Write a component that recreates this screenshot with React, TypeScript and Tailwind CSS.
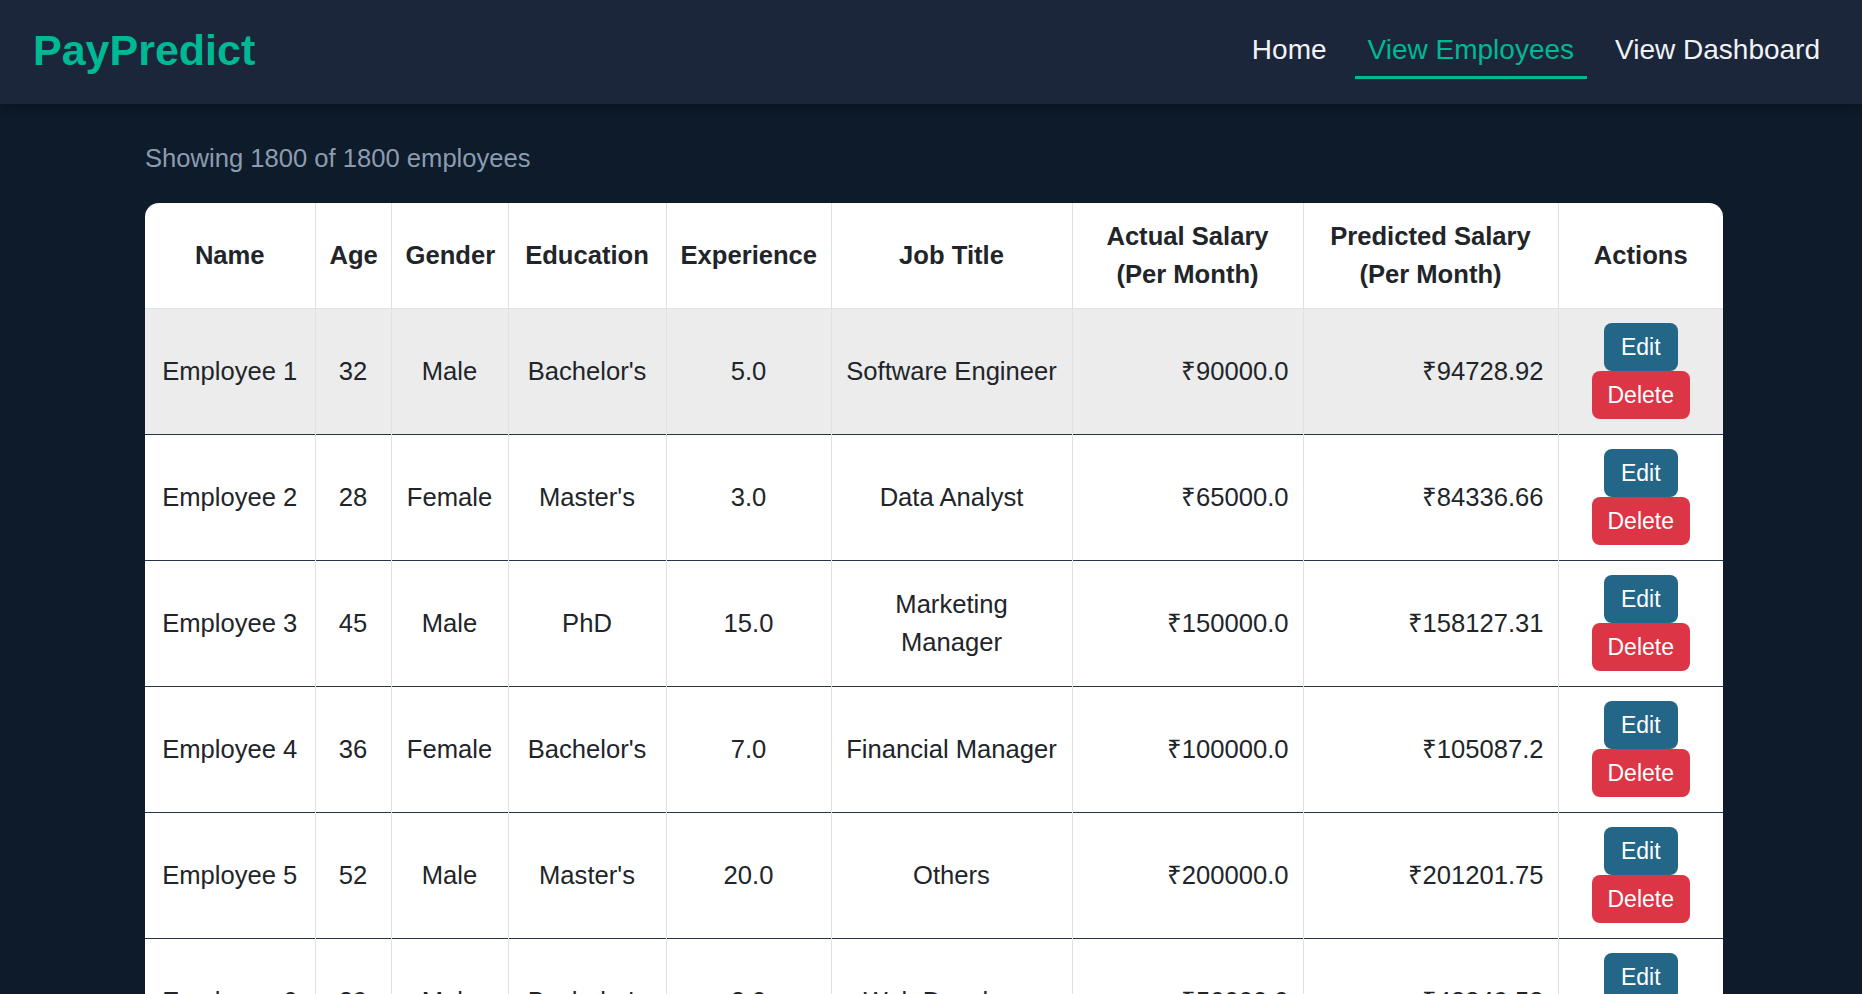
import React from "react";

interface Employee {
  name: string;
  age: number;
  gender: string;
  education: string;
  experience: string;
  jobTitle: string;
  actual: string;
  predicted: string;
}

const employees: Employee[] = [
  { name: "Employee 1", age: 32, gender: "Male", education: "Bachelor's", experience: "5.0", jobTitle: "Software Engineer", actual: "₹90000.0", predicted: "₹94728.92" },
  { name: "Employee 2", age: 28, gender: "Female", education: "Master's", experience: "3.0", jobTitle: "Data Analyst", actual: "₹65000.0", predicted: "₹84336.66" },
  { name: "Employee 3", age: 45, gender: "Male", education: "PhD", experience: "15.0", jobTitle: "Marketing Manager", actual: "₹150000.0", predicted: "₹158127.31" },
  { name: "Employee 4", age: 36, gender: "Female", education: "Bachelor's", experience: "7.0", jobTitle: "Financial Manager", actual: "₹100000.0", predicted: "₹105087.2" },
  { name: "Employee 5", age: 52, gender: "Male", education: "Master's", experience: "20.0", jobTitle: "Others", actual: "₹200000.0", predicted: "₹201201.75" },
  { name: "Employee 6", age: 29, gender: "Male", education: "Bachelor's", experience: "2.0", jobTitle: "Web Developer", actual: "₹50000.0", predicted: "₹48849.58" },
  { name: "Employee 7", age: 42, gender: "Female", education: "Master's", experience: "12.0", jobTitle: "Product Manager", actual: "₹120000.0", predicted: "₹126310.44" },
];

const columns = [
  { label: "Name", w: "w-[170px]" },
  { label: "Age", w: "w-[76px]" },
  { label: "Gender", w: "w-[117px]" },
  { label: "Education", w: "w-[158px]" },
  { label: "Experience", w: "w-[165px]" },
  { label: "Job Title", w: "w-[241px]" },
  { label: "Actual Salary (Per Month)", w: "w-[231px]" },
  { label: "Predicted Salary (Per Month)", w: "w-[255px]" },
  { label: "Actions", w: "w-[165px]" },
];

const NavLink = ({ label, active }: { label: string; active?: boolean }) => (
  <a
    href="#"
    className={
      active
        ? "px-[13px] py-[5px] leading-[42px] border-b-[3px] border-[#00b894] text-[#00b894]"
        : "px-[13px] py-[5px] leading-[42px] border-b-[3px] border-transparent text-[#f1f3f5]"
    }
  >
    {label}
  </a>
);

const App: React.FC = () => {
  const td = "px-[14px] py-[14.5px] border-x border-[#dee2e6] first:border-l-0 last:border-r-0";

  return (
    <div className="min-h-screen bg-[#0d1b2a] font-[family-name:Liberation_Sans,Arial,sans-serif]">
      {/* Navbar */}
      <header className="h-[104px] bg-[#1b263b] flex items-center justify-between pl-[33px] pr-[29px] shadow-[0_3px_10px_rgba(0,0,0,0.35)] relative">
        <div className="text-[43px] font-bold text-[#00b894] leading-none -mt-[4px]">PayPredict</div>
        <nav className="flex items-center gap-[15px] text-[28px] -mt-[1px]">
          <NavLink label="Home" />
          <NavLink label="View Employees" active />
          <NavLink label="View Dashboard" />
        </nav>
      </header>

      <main className="pt-[35px] pl-[145px] pb-10">
        <p className="text-[25.6px] leading-[38px] text-[#8d9bb0] mb-[26px]">
          Showing 1800 of 1800 employees
        </p>

        <div className="w-[1578px] bg-white rounded-[14px] overflow-hidden">
          <table className="w-full table-fixed border-collapse text-[25.6px] leading-[38.4px] text-[#212529]">
            <thead>
              <tr className="border-b border-[#dee2e6]">
                {columns.map((c) => (
                  <th key={c.label} className={`${c.w} ${td} !py-[14px] font-bold text-center align-middle`}>
                    {c.label}
                  </th>
                ))}
              </tr>
            </thead>
            <tbody>
              {employees.map((e, i) => (
                <tr
                  key={e.name}
                  className={`${i === 0 ? "bg-[#ececec]" : "bg-white"} border-b border-[#2b3548]`}
                >
                  <td className={`${td} text-center`}>{e.name}</td>
                  <td className={`${td} text-center`}>{e.age}</td>
                  <td className={`${td} text-center`}>{e.gender}</td>
                  <td className={`${td} text-center`}>{e.education}</td>
                  <td className={`${td} text-center`}>{e.experience}</td>
                  <td className={`${td} text-center !px-[13px]`}>{e.jobTitle}</td>
                  <td className={`${td} text-right`}>{e.actual}</td>
                  <td className={`${td} text-right`}>{e.predicted}</td>
                  <td className={`${td}`}>
                    <div className="flex flex-col items-center">
                      <button className="h-[48px] px-[17px] rounded-[8px] bg-[#236688] text-white text-[23px] leading-[34px]">
                        Edit
                      </button>
                      <button className="h-[48px] px-[16px] rounded-[8px] bg-[#dc3545] text-white text-[23px] leading-[34px]">
                        Delete
                      </button>
                    </div>
                  </td>
                </tr>
              ))}
            </tbody>
          </table>
        </div>
      </main>
    </div>
  );
};

export default App;
